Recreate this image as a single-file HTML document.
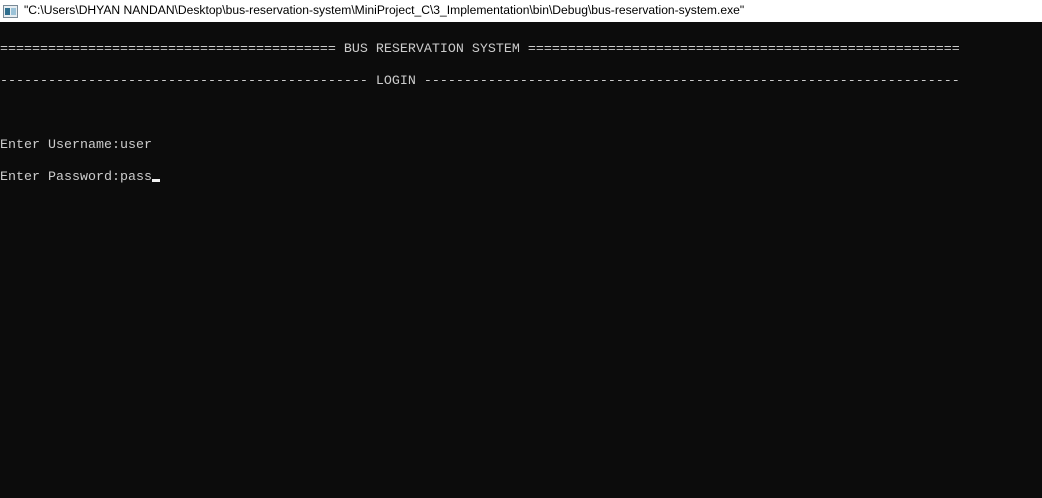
<!DOCTYPE html>
<html><head><meta charset="utf-8"><style>
html,body{margin:0;padding:0;width:1042px;height:498px;overflow:hidden;background:#0c0c0c}
#tb{position:absolute;left:0;top:0;width:1042px;height:22px;background:#fff}
#ic{position:absolute;left:3px;top:5px;width:13px;height:11px;border:1px solid #7a8a96;background:#e8eef2}
#ic:before{content:"";position:absolute;left:1px;top:2px;width:5px;height:7px;background:#2f6f8f}
#ic:after{content:"";position:absolute;left:7px;top:2px;width:5px;height:7px;background:#9cc3d8}
#tt{position:absolute;left:24px;top:3px;font:12.1px "Liberation Sans",sans-serif;color:#000;white-space:pre}
#con{position:absolute;left:0;top:26px;font:13.33px/16px "Liberation Mono",monospace;color:#cccccc;white-space:pre;margin:0}
.cur{display:inline-block;width:8px;height:3px;background:#f2f2f2;vertical-align:-2px}
</style></head><body>
<div id="tb"><div id="ic"></div><div id="tt">"C:\Users\DHYAN NANDAN\Desktop\bus-reservation-system\MiniProject_C\3_Implementation\bin\Debug\bus-reservation-system.exe"</div></div>
<pre id="con">

========================================== BUS RESERVATION SYSTEM ======================================================

---------------------------------------------- LOGIN -------------------------------------------------------------------



Enter Username:user

Enter Password:pass<span class="cur"></span></pre>
</body></html>
